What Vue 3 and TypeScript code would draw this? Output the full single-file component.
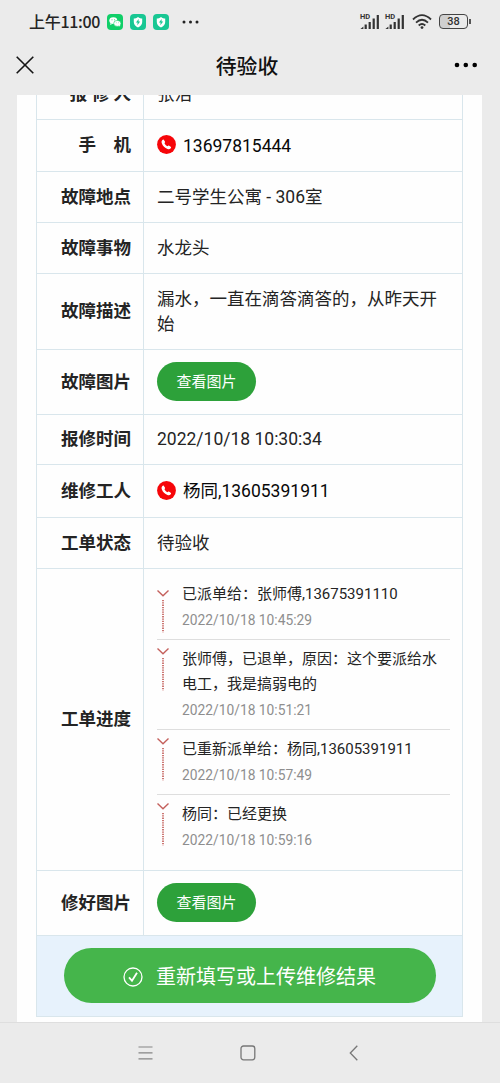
<script setup lang="ts">
interface Row {
  label: string
  kind: 'text' | 'phone' | 'button' | 'progress'
  value?: string
  size: string
}
interface Step {
  text: string
  time: string
}

const rows: Row[] = [
  { label: '报 修 人', kind: 'text', value: '张浩', size: 'first' },
  { label: '手　机', kind: 'phone', value: '13697815444', size: 'h52' },
  { label: '故障地点', kind: 'text', value: '二号学生公寓 - 306室', size: 'h51' },
  { label: '故障事物', kind: 'text', value: '水龙头', size: 'h51' },
  { label: '故障描述', kind: 'text', value: '漏水，一直在滴答滴答的，从昨天开始', size: 'h76' },
  { label: '故障图片', kind: 'button', value: '查看图片', size: 'h65' },
  { label: '报修时间', kind: 'text', value: '2022/10/18 10:30:34', size: 'h50' },
  { label: '维修工人', kind: 'phone', value: '杨同,13605391911', size: 'h53' },
  { label: '工单状态', kind: 'text', value: '待验收', size: 'h51' },
  { label: '工单进度', kind: 'progress', size: 'h302' },
  { label: '修好图片', kind: 'button', value: '查看图片', size: 'h65' },
]

const steps: Step[] = [
  { text: '已派单给：张师傅,13675391110', time: '2022/10/18 10:45:29' },
  { text: '张师傅，已退单，原因：这个要派给水电工，我是搞弱电的', time: '2022/10/18 10:51:21' },
  { text: '已重新派单给：杨同,13605391911', time: '2022/10/18 10:57:49' },
  { text: '杨同：已经更换', time: '2022/10/18 10:59:16' },
]
</script>

<template>
  <div class="screen">
    <header class="status">
      <span class="clock">上午11:00</span>
      <div class="apps">
        <svg width="16" height="16" viewBox="0 0 16 16">
          <rect width="16" height="16" rx="4" fill="#10cf68" />
          <ellipse cx="6.3" cy="6.6" rx="4" ry="3.4" fill="#fff" />
          <path d="M3.5 9l-.4 2 2-1z" fill="#fff" />
          <ellipse cx="10.3" cy="9.4" rx="3.6" ry="3" fill="#fff" stroke="#10cf68" stroke-width=".6" />
          <path d="M11.5 11.8l1.6.8-.3-1.8z" fill="#fff" />
          <g fill="#10cf68"><circle cx="5" cy="5.8" r=".5" /><circle cx="7.6" cy="5.8" r=".5" /><circle cx="9.2" cy="8.8" r=".4" /><circle cx="11.5" cy="8.8" r=".4" /></g>
        </svg>
        <svg v-for="n in 2" :key="n" width="16" height="16" viewBox="0 0 16 16">
          <rect width="16" height="16" rx="4" fill="#18c793" />
          <path d="M8 2.9C9.4 4 10.8 4.3 12.2 4.4V8c0 2.7-1.7 4.3-4.2 5.4C5.5 12.3 3.8 10.7 3.8 8V4.4C5.2 4.3 6.6 4 8 2.9z" fill="#fff" />
          <path d="M8.7 4.9L5.9 8.5h1.7L7.3 11.2l2.9-3.7H8.500z" fill="#18c793" />
        </svg>
      </div>
      <svg class="more" width="18" height="4" viewBox="0 0 18 4" fill="#222">
        <circle cx="2" cy="2" r="1.5" /><circle cx="8.5" cy="2" r="1.5" /><circle cx="15" cy="2" r="1.5" />
      </svg>
      <div class="indicators">
        <div v-for="n in 2" :key="n" class="signal">
          <span class="hd">HD</span>
          <svg width="20" height="14" viewBox="0 0 20 14" fill="#333">
            <path d="M.4 14l3-2.6V14z" /><rect x="4.6" y="9.5" width="2.2" height="4.5" /><rect x="8.6" y="7" width="2.2" height="7" /><rect x="12.6" y="3.5" width="2.2" height="10.5" /><rect x="16.7" y="0" width="2.2" height="14" />
          </svg>
        </div>
        <svg class="wifi" width="20" height="16" viewBox="0 0 20 16" fill="none" stroke="#333" stroke-width="1.8">
          <path d="M1 5.5Q10-3.2 19 5.5" /><path d="M4 8.6Q10 2.9 16 8.6" /><path d="M6.7 11.5Q10 8.6 13.3 11.5" /><circle cx="10" cy="13.6" r="1.4" fill="#333" stroke="none" />
        </svg>
        <div class="battery"><span>38</span></div>
      </div>
    </header>

    <nav class="bar">
      <svg width="18" height="18" viewBox="0 0 18 18" fill="none" stroke="#151515" stroke-width="1.6"><path d="M.7.7l16.600 16.600M17.300.7L.7 17.300" /></svg>
      <h1>待验收</h1>
      <svg width="24" height="6" viewBox="0 0 24 6"><circle cx="3" cy="3" r="2.3" /><circle cx="11.8" cy="3" r="2.3" /><circle cx="20.7" cy="3" r="2.3" /></svg>
    </nav>

    <main class="page">
      <section class="sheet">
        <div v-for="row in rows" :key="row.label" class="row" :class="row.size">
          <div class="label"><span>{{ row.label }}</span></div>
          <div class="value">
            <span v-if="row.kind === 'text'">{{ row.value }}</span>
            <a v-else-if="row.kind === 'phone'" class="phone">
              <svg width="19" height="19" viewBox="0 0 19 19">
                <circle cx="9.5" cy="9.5" r="9.4" fill="#f60509" />
                <path d="M5.2 5.2c.7-.7 1.2-.8 1.7-.2l1 1.4c.4.6.2 1-.5 1.6.6 1.5 1.7 2.6 3.2 3.3.6-.8 1-.9 1.6-.5l1.5 1c.6.5.5 1-.2 1.7-.8.8-1.8.9-3 .4C7.9 13 5.7 10.900 4.800 8.200c-.4-1.200-.3-2.200.4-3z" fill="#fff" />
              </svg>
              <span>{{ row.value }}</span>
            </a>
            <button v-else-if="row.kind === 'button'" class="view">{{ row.value }}</button>
            <ol v-else class="steps">
              <li v-for="step in steps" :key="step.time">
                <svg width="13" height="46" viewBox="0 0 13 46" fill="none" stroke="#c4605c">
                  <path d="M.5 1.500l5.500 5.200 5.500-5.200" stroke-width="1.400" />
                  <path d="M6 11v32.500" stroke-width="1.700" stroke-dasharray="1.300 1" />
                </svg>
                <div>
                  <p>{{ step.text }}</p>
                  <time>{{ step.time }}</time>
                </div>
              </li>
            </ol>
          </div>
        </div>
        <div class="action">
          <button class="submit">
            <svg width="20" height="20" viewBox="0 0 20 20" fill="none" stroke="#fff">
              <circle cx="10" cy="10" r="9" stroke-width="1.3" /><path d="M6 10.300l3 3.500 5-8" stroke-width="1.8" />
            </svg>
            <span>重新填写或上传维修结果</span>
          </button>
        </div>
      </section>
    </main>

    <footer class="system">
      <svg width="15" height="14" viewBox="0 0 15 14" stroke="#858585" stroke-width="1.2"><path d="M.5 1h14M.5 6.800h14M.5 12.800h14" /></svg>
      <svg width="16" height="16" viewBox="0 0 16 16" fill="none" stroke="#777" stroke-width="1.3"><rect x="1" y="1" width="13.8" height="13.8" rx="2.5" /></svg>
      <svg width="10" height="16" viewBox="0 0 10 16" fill="none" stroke="#777" stroke-width="1.3"><path d="M8.300.8L1.300 8l7 7.200" /></svg>
    </footer>
  </div>
</template>

<style>
body {
  background: #ebebeb;
}
</style>

<style scoped>
.screen {
  width: 500px;
  height: 1083px;
  display: flex;
  flex-direction: column;
  overflow: hidden;
  background: #ebebeb;
  color: #242424;
  font-family: Roboto, "Noto Sans CJK SC", sans-serif;
}
.status {
  display: flex;
  align-items: center;
  height: 43px;
  padding: 0 29px;
  flex: none;
}
.clock {
  width: 78px;
  padding-bottom: 1px;
  font: 500 16px/20px "Noto Sans CJK SC", sans-serif;
  letter-spacing: -0.3px;
  white-space: nowrap;
}
.apps {
  display: flex;
  gap: 7px;
}
.more {
  margin-left: 13px;
}
.indicators {
  display: flex;
  align-items: center;
  margin-left: auto;
}
.signal {
  position: relative;
  display: flex;
  align-items: flex-end;
  width: 20px;
  height: 15px;
  margin-right: 5px;
}
.hd {
  position: absolute;
  top: -1px;
  left: 0;
  font: 700 7.5px/7px Roboto, sans-serif;
  color: #333;
}
.wifi {
  margin: 0 7px 0 2px;
}
.battery {
  position: relative;
  box-sizing: border-box;
  width: 29px;
  height: 15px;
  margin-right: 3px;
  border: 1.5px solid #444;
  border-radius: 4px;
  text-align: center;
  background: linear-gradient(90deg, #cfcfcf 38%, transparent 38%);
  font: 500 11px/13px Roboto, sans-serif;
  color: #333;
}
.battery::after {
  content: "";
  position: absolute;
  top: 4px;
  right: -4px;
  width: 2px;
  height: 5px;
  background: #555;
}
.bar {
  display: grid;
  grid-template-columns: 100px 1fr 100px;
  align-items: center;
  height: 44px;
  padding: 0 22px 0 16px;
  margin-bottom: 8px;
  flex: none;
}
.bar svg:last-child {
  justify-self: end;
}
h1 {
  margin: 0;
  text-align: center;
  font: 500 20.8px/30px "Noto Sans CJK SC", sans-serif;
  color: #111;
}
.page {
  height: 927px;
  margin: 0 18px 0 17px;
  padding: 0 19px;
  background: #fefefe;
  overflow: hidden;
  flex: none;
}
.sheet {
  box-sizing: border-box;
  width: 427px;
  border: solid #d9e6ec;
  border-width: 0 1px 1px;
}
.row {
  box-sizing: border-box;
  display: grid;
  grid-template-columns: 107px 1fr;
  border-bottom: 1px solid #d9e6ec;
}
.first { height: 51px; margin-top: -26px; }
.h50 { height: 50px; }
.h51 { height: 51px; }
.h52 { height: 52px; }
.h53 { height: 53px; }
.h65 { height: 65px; }
.h76 { height: 76px; }
.h302 { height: 302px; }
.label {
  display: flex;
  align-items: center;
  justify-content: flex-end;
  padding: 0 12px 4px 0;
  border-right: 1px solid #d9e6ec;
  font-size: 17.5px;
  font-weight: 700;
  white-space: pre;
}
.value {
  display: flex;
  align-items: center;
  padding: 0 12px 0 13px;
  font-size: 17.5px;
  line-height: 25px;
}
.phone {
  display: flex;
  align-items: center;
  gap: 7px;
  padding-bottom: 2px;
  color: #080808;
}
.phone span {
  padding-top: 3px;
}
button {
  border: 0;
  color: #fff;
  font-family: "Noto Sans CJK SC", sans-serif;
}
.view {
  width: 99px;
  height: 39px;
  margin-bottom: 1px;
  padding: 0 0 2px;
  border-radius: 20px;
  background: #2da13a;
  font-size: 15px;
}
.steps {
  width: 100%;
  margin: 0;
  padding: 0 0 6px;
  list-style: none;
}
.steps li {
  display: flex;
  gap: 12px;
  padding: 7px 0 6px;
  border-bottom: 1px solid #dedede;
}
.steps li:last-child {
  border: 0;
}
.steps svg {
  flex: none;
  margin: 0 0 -8px;
}
.steps li:first-child svg {
  margin-top: 7px;
}
.steps p {
  margin: 0;
  font-size: 15px;
  line-height: 25px;
}
.steps time {
  display: block;
  font-size: 13.8px;
  line-height: 26px;
  color: #8e8e8e;
}
.action {
  box-sizing: border-box;
  display: flex;
  align-items: center;
  justify-content: center;
  height: 80px;
  padding-bottom: 1px;
  background: #e7f2fc;
}
.submit {
  display: flex;
  align-items: center;
  justify-content: center;
  gap: 13px;
  width: 372px;
  height: 55px;
  padding: 0;
  border-radius: 28px;
  background: #45b54b;
  font-size: 20px;
  line-height: 30px;
}
.submit svg {
  margin-top: 3px;
}
.system {
  display: flex;
  align-items: center;
  flex: 1;
  padding-left: 138px;
  border-top: 1px solid #dedede;
}
.system svg:nth-child(2) {
  margin-left: 87px;
}
.system svg:nth-child(3) {
  margin-left: 93px;
}
</style>
